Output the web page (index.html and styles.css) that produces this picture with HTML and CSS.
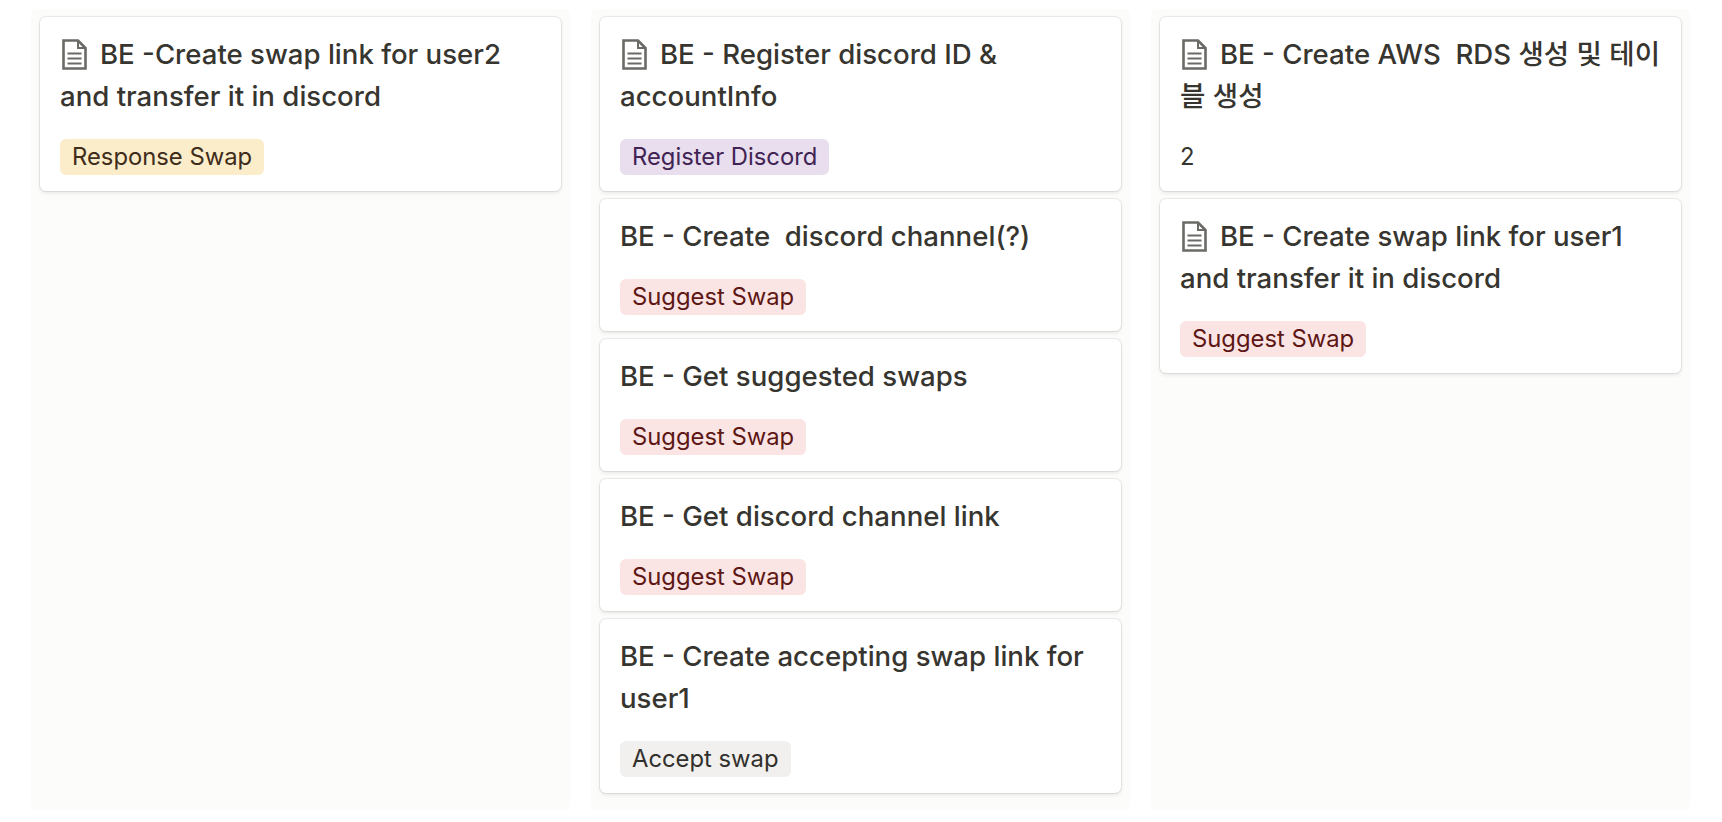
FILE: index.html
```html
<!DOCTYPE html>
<html lang="en">
<head>
  <meta charset="UTF-8">
  <title>Board</title>
  <link rel="stylesheet" href="styles.css">
</head>
<body>

<svg class="sprite" width="0" height="0">
  <symbol id="doc" viewBox="0 0 25 31">
    <path d="M1.5 1.5H16L23.5 9V29.5H1.5Z" fill="none" stroke="currentColor" stroke-width="2.6"/>
    <path d="M16 1.5V9H23.5" fill="none" stroke="currentColor" stroke-width="2"/>
    <path d="M5.5 14.5H19.5M5.5 19.5H19.5M5.5 24.5H19.5" fill="none" stroke="currentColor" stroke-width="2.2"/>
  </symbol>
</svg>

<div class="board">
  <div class="column">
    <div class="card">
      <div class="title"><svg class="doc"><use href="#doc"/></svg>BE -Create swap link for user2 and transfer it in discord</div>
      <div class="tags"><span class="tag yellow">Response Swap</span></div>
    </div>
  </div>

  <div class="column">
    <div class="card">
      <div class="title"><svg class="doc"><use href="#doc"/></svg>BE - Register discord ID &amp; accountInfo</div>
      <div class="tags"><span class="tag purple">Register Discord</span></div>
    </div>
    <div class="card">
      <div class="title">BE - Create &nbsp;discord channel(?)</div>
      <div class="tags"><span class="tag red">Suggest Swap</span></div>
    </div>
    <div class="card">
      <div class="title">BE - Get suggested swaps</div>
      <div class="tags"><span class="tag red">Suggest Swap</span></div>
    </div>
    <div class="card">
      <div class="title">BE - Get discord channel link</div>
      <div class="tags"><span class="tag red">Suggest Swap</span></div>
    </div>
    <div class="card">
      <div class="title">BE - Create accepting swap link for user1</div>
      <div class="tags"><span class="tag gray">Accept swap</span></div>
    </div>
  </div>

  <div class="column">
    <div class="card">
      <div class="title"><svg class="doc"><use href="#doc"/></svg>BE - Create AWS &nbsp;RDS 생성 및 테이블 생성</div>
      <div class="tags"><span class="number">2</span></div>
    </div>
    <div class="card">
      <div class="title"><svg class="doc"><use href="#doc"/></svg>BE - Create swap link for user1 and transfer it in discord</div>
      <div class="tags"><span class="tag red">Suggest Swap</span></div>
    </div>
  </div>
</div>

</body>
</html>
```

FILE: styles.css
```css
body {
  margin: 0;
  background: #ffffff;
  font-family: 'Inter', 'Noto Sans CJK KR', sans-serif;
  color: #37352f;
  overflow: hidden;
}

.sprite {
  display: block;
}

.board {
  display: flex;
  gap: 21px;
  height: 801px;
  padding: 9px 32px 0 31px;
}

.column {
  flex: 1;
  display: flex;
  flex-direction: column;
  gap: 8px;
  padding: 8px 9px;
  background: #fcfcfb;
  border-radius: 6px;
}

.card {
  background: #ffffff;
  border-radius: 6px;
  padding: 16px 20px 16px;
  box-shadow: 0 0 0 1px rgba(15, 15, 15, 0.07), 0 2px 4px rgba(15, 15, 15, 0.09);
}

.title {
  font-size: 27.6px;
  font-weight: 500;
  line-height: 42px;
}

.doc {
  width: 25px;
  height: 31px;
  margin: 0 13px 0 2px;
  vertical-align: -6px;
  color: #6b6a66;
}

.tags {
  display: flex;
  margin-top: 22px;
  height: 36px;
  align-items: center;
}

.tag {
  font-size: 23.8px;
  line-height: 36px;
  padding: 0 12px;
  border-radius: 6px;
}

.number {
  font-size: 23.8px;
  line-height: 36px;
}

.yellow {
  background: #fbecca;
  color: #402c1b;
}

.purple {
  background: #e8deee;
  color: #412454;
}

.red {
  background: #fbe4e4;
  color: #5d1715;
}

.gray {
  background: #f1f0ee;
  color: #32302c;
}
```
